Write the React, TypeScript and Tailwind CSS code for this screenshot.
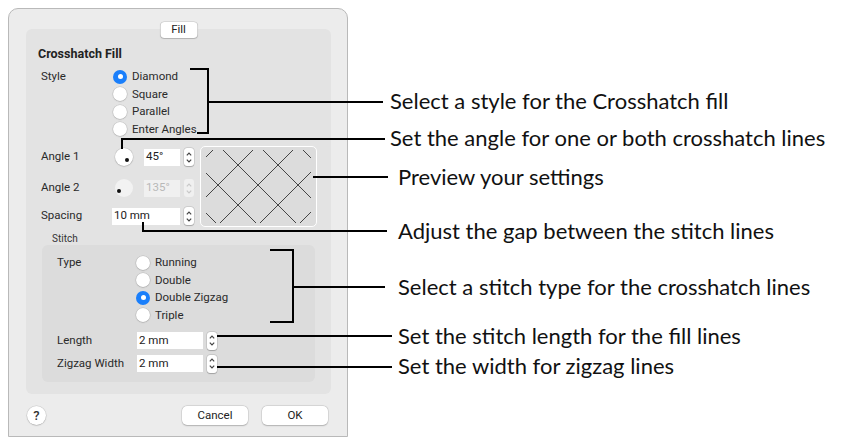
import React from "react";

const ui = { fontFamily: "Roboto, 'Liberation Sans', sans-serif" };
const note = { fontFamily: "Lato, 'Open Sans', sans-serif" };

function Radio({ on, label }: { on?: boolean; label: string }) {
    return (
        <div className="flex items-center h-[17.5px]">
            {on ? (
                <div className="w-[14px] h-[14px] rounded-full bg-[#1a7ffb] flex items-center justify-center">
                    <div className="w-[5px] h-[5px] rounded-full bg-white" />
                </div>
            ) : (
                <div className="w-[14px] h-[14px] rounded-full bg-white shadow-[0_0_0_0.5px_rgba(0,0,0,0.12),0_0.5px_1.5px_rgba(0,0,0,0.2)]" />
            )}
            <span className="ml-[5px] text-[11.5px] text-[#2a2a2a]">{label}</span>
        </div>
    );
}

function Stepper({ disabled }: { disabled?: boolean }) {
    const c = disabled ? "#c8c8c8" : "#444";
    return (
        <div className={`ml-[4px] w-[10px] h-[18px] rounded-[3px] flex flex-col items-center justify-center gap-[3px] ${disabled ? "bg-[#f0f0f0]" : "bg-white shadow-[0_0_0_0.5px_rgba(0,0,0,0.15),0_0.5px_1px_rgba(0,0,0,0.2)]"}`}>
            <svg width="6" height="4" viewBox="0 0 6 4"><path d="M0.8 3.3 L3 1 L5.2 3.3" fill="none" stroke={c} strokeWidth="1.2" /></svg>
            <svg width="6" height="4" viewBox="0 0 6 4"><path d="M0.8 0.7 L3 3 L5.2 0.7" fill="none" stroke={c} strokeWidth="1.2" /></svg>
        </div>
    );
}

function Field({ value, w, disabled }: { value: string; w: string; disabled?: boolean }) {
    return (
        <div className={`${w} h-[17px] flex items-center pl-[2px] text-[11.5px] ${disabled ? "bg-[#f0f0f0] text-[#b8b8b8]" : "bg-white text-[#222]"}`}>
            {value}
        </div>
    );
}

function Dial({ dot, disabled }: { dot: string; disabled?: boolean }) {
    return (
        <div className={`relative ml-[3px] w-[18px] h-[18px] rounded-full ${disabled ? "bg-[#f2f2f2]" : "bg-white shadow-[0_0_0_0.5px_rgba(0,0,0,0.1),0_0.5px_1.5px_rgba(0,0,0,0.2)]"}`}>
            <div className={`absolute w-[4px] h-[4px] rounded-full bg-[#111] ${dot}`} />
        </div>
    );
}

function Preview() {
    const a = [-99, -59, -19, 21, 61];
    const b = [17, 57, 97, 137, 177];
    return (
        <div className="ml-[6px] w-[117px] h-[81px] rounded-[5px] border border-white bg-[#dcdcdc]">
            <svg width="115" height="79" viewBox="1 1 115 79">
                <defs>
                    <clipPath id="cl"><rect x="6" y="4" width="105" height="73" /></clipPath>
                </defs>
                <g clipPath="url(#cl)" stroke="#333" strokeWidth="0.9">
                    {a.map((c) => <line key={"a" + c} x1={-20} y1={-20 + c} x2={140} y2={140 + c} />)}
                    {b.map((k) => <line key={"b" + k} x1={-20} y1={20 + k} x2={140} y2={-140 + k} />)}
                </g>
            </svg>
        </div>
    );
}

function Button({ label }: { label: string }) {
    return (
        <div className="w-[66px] h-[19px] rounded-[5px] bg-white shadow-[0_0_0_0.5px_rgba(0,0,0,0.12),0_0.5px_1.5px_rgba(0,0,0,0.2)] flex items-center justify-center text-[11.5px] text-[#222]">
            {label}
        </div>
    );
}

const notes = [
    { y: 101, x: 390, text: "Select a style for the Crosshatch fill" },
    { y: 138, x: 390, text: "Set the angle for one or both crosshatch lines" },
    { y: 177, x: 398, text: "Preview your settings" },
    { y: 231, x: 398, text: "Adjust the gap between the stitch lines" },
    { y: 287, x: 398, text: "Select a stitch type for the crosshatch lines" },
    { y: 336, x: 398, text: "Set the stitch length for the fill lines" },
    { y: 366, x: 398, text: "Set the width for zigzag lines" },
];

// callout strokes: [left, top, width, height]
const strokes: [number, number, number, number][] = [
    [190, 68, 19, 2], [207, 68, 2, 66], [197, 132, 12, 2], [207, 101, 176, 2],
    [121, 138, 2, 11], [121, 138, 264, 2],
    [313, 176, 75, 2],
    [142, 222, 2, 10], [142, 230, 245, 2],
    [270, 249, 24, 2], [292, 249, 2, 74], [270, 321, 24, 2], [292, 286, 93, 2],
    [217, 335, 175, 2],
    [217, 366, 175, 2],
];

export default function App() {
    return (
        <div className="relative w-[848px] h-[437px] overflow-hidden bg-white" style={ui}>
            <div className="ml-[8px] mt-[8px] w-[340px] h-[429px] rounded-t-[10px] border border-[#b9b9b9] bg-[#ececec] flex flex-col">
                <div className="relative ml-[17px] mt-[20px] w-[305px] h-[365px] rounded-[6px] bg-[#e3e3e3] pl-[12px] pt-[18px]">
                    <div className="absolute left-1/2 -translate-x-1/2 top-[-7px] w-[37px] h-[16px] rounded-[4px] bg-white shadow-[0_0_0_0.5px_rgba(0,0,0,0.15),0_0.5px_1px_rgba(0,0,0,0.15)] flex items-center justify-center text-[11.5px] text-[#222]">
                        Fill
                    </div>
                    <div className="h-[14px] leading-[14px] text-[12.5px] font-bold text-[#222]">Crosshatch Fill</div>

                    <div className="flex mt-[7px]">
                        <div className="w-[75px] pl-[3px] h-[17.5px] flex items-center text-[11.5px] text-[#2a2a2a]">Style</div>
                        <div className="flex flex-col">
                            <Radio on label="Diamond" />
                            <Radio label="Square" />
                            <Radio label="Parallel" />
                            <Radio label="Enter Angles" />
                        </div>
                    </div>

                    <div className="flex mt-[8px]">
                        <div className="w-[156px] flex flex-col">
                            <div className="h-[22px] flex items-center">
                                <div className="w-[74px] pl-[3px] text-[11.5px] text-[#2a2a2a]">Angle 1</div>
                                <Dial dot="left-[10px] top-[10px]" />
                                <div className="ml-[11px]"><Field value="45°" w="w-[36px]" /></div>
                                <Stepper />
                            </div>
                            <div className="h-[22px] mt-[9px] flex items-center">
                                <div className="w-[74px] pl-[3px] text-[11.5px] text-[#2a2a2a]">Angle 2</div>
                                <Dial dot="left-[2px] top-[10px]" disabled />
                                <div className="ml-[11px]"><Field value="135°" w="w-[36px]" disabled /></div>
                                <Stepper disabled />
                            </div>
                            <div className="h-[22px] mt-[6px] flex items-center">
                                <div className="w-[74px] pl-[3px] text-[11.5px] text-[#2a2a2a]">Spacing</div>
                                <Field value="10 mm" w="w-[68px]" />
                                <Stepper />
                            </div>
                        </div>
                        <Preview />
                    </div>

                    <div className="mt-[6px] pl-[14px] h-[12px] leading-[12px] text-[10px] text-[#333]">Stitch</div>
                    <div className="ml-[4px] w-[273px] h-[137px] rounded-[6px] bg-[#dcdcdc] pl-[15px] pt-[9px]">
                        <div className="flex">
                            <div className="w-[79px] h-[17.5px] flex items-center text-[11.5px] text-[#2a2a2a]">Type</div>
                            <div className="flex flex-col">
                                <Radio label="Running" />
                                <Radio label="Double" />
                                <Radio on label="Double Zigzag" />
                                <Radio label="Triple" />
                            </div>
                        </div>
                        <div className="mt-[8px] h-[17px] flex items-center">
                            <div className="w-[80px] text-[11.5px] text-[#2a2a2a]">Length</div>
                            <Field value="2 mm" w="w-[66px]" />
                            <Stepper />
                        </div>
                        <div className="mt-[6px] h-[17px] flex items-center">
                            <div className="w-[80px] text-[11.5px] text-[#2a2a2a] whitespace-nowrap">Zigzag Width</div>
                            <Field value="2 mm" w="w-[66px]" />
                            <Stepper />
                        </div>
                    </div>
                </div>

                <div className="mt-[12px] h-[19px] flex items-center pl-[18px] pr-[19px]">
                    <div className="w-[19px] h-[19px] rounded-full bg-white shadow-[0_0_0_0.5px_rgba(0,0,0,0.12),0_0.5px_1.5px_rgba(0,0,0,0.2)] flex items-center justify-center text-[13px] font-medium text-[#333]">
                        ?
                    </div>
                    <div className="ml-auto flex gap-[14px]">
                        <Button label="Cancel" />
                        <Button label="OK" />
                    </div>
                </div>
            </div>

            {strokes.map(([l, t, w, h], i) => (
                <div key={i} className="absolute bg-black" style={{ left: l, top: t, width: w, height: h }} />
            ))}
            {notes.map((n) => (
                <div key={n.text} className="absolute text-[22px] leading-[24px] text-[#111] whitespace-nowrap" style={{ ...note, left: n.x, top: n.y - 12 }}>
                    {n.text}
                </div>
            ))}
        </div>
    );
}
